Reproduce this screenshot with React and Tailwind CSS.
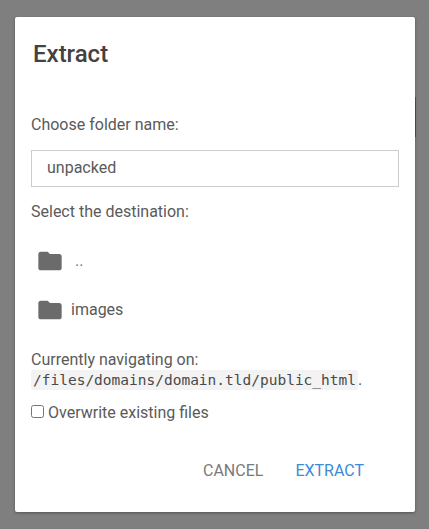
import React from "react";

function FolderIcon() {
  return (
    <svg viewBox="0 0 24 24" className="w-[28px] h-[28px] fill-[#6b6b6b] shrink-0">
      <path d="M10 4H4c-1.1 0-1.99.9-1.99 2L2 18c0 1.1.9 2 2 2h16c1.1 0 2-.9 2-2V8c0-1.1-.9-2-2-2h-8l-2-2z" />
    </svg>
  );
}

export default function App() {
  return (
    <div className="h-screen overflow-hidden bg-[#7f7f7f] pt-[17px] pl-[15px] font-['Roboto',sans-serif] text-[#5a5a5a] text-[16px]">
      <div className="relative w-[400px] h-[495px] bg-white rounded-[2px] shadow-[0_1px_3px_rgba(0,0,0,0.35)] flex flex-col">
        <div className="absolute right-[-1px] top-[80px] w-[1px] h-[40px] bg-[#34505f]" />
        <h1 className="ml-[18px] mt-[22px] text-[24px] leading-[30px] font-medium text-[#424242]">Extract</h1>

        <div className="flex flex-col px-[16px] mt-[47px]">
          <p className="leading-[18px]">Choose folder name:</p>
          <input
            readOnly
            value="unpacked"
            className="mt-[16px] w-[368px] h-[37px] border border-[#cccccc] pl-[15px] pb-[2px] text-[#5a5a5a] outline-none"
          />
          <p className="mt-[16px] leading-[18px]">Select the destination:</p>

          <div className="flex items-center h-[28px] mt-[26px] pl-[5px]">
            <FolderIcon />
            <span className="ml-[11px] text-[#777777]">..</span>
          </div>
          <div className="flex items-center h-[28px] mt-[21px] pl-[5px]">
            <FolderIcon />
            <span className="ml-[7px]">images</span>
          </div>

          <p className="mt-[27px] leading-[18px]">Currently navigating on:</p>
          <p className="leading-[20px] mt-[1px]">
            <code className="bg-[#f3f3f3] px-[2px] py-[2px] rounded-[2px] font-['DejaVu_Sans_Mono',monospace] text-[14.5px] text-[#4a4a4a]">/files/domains/domain.tld/public_html</code>.
          </p>

          <label className="flex items-center mt-[14px] leading-[18px]">
            <input type="checkbox" className="w-[13px] h-[13px] mr-[4px] mb-[3px]" />
            Overwrite existing files
          </label>
        </div>

        <div className="flex justify-end mt-[40px] pr-[51px] gap-[32px] text-[#7a7a7a] leading-[18px]">
          <span>CANCEL</span>
          <span className="text-[#3a8bd8]">EXTRACT</span>
        </div>
      </div>
    </div>
  );
}
